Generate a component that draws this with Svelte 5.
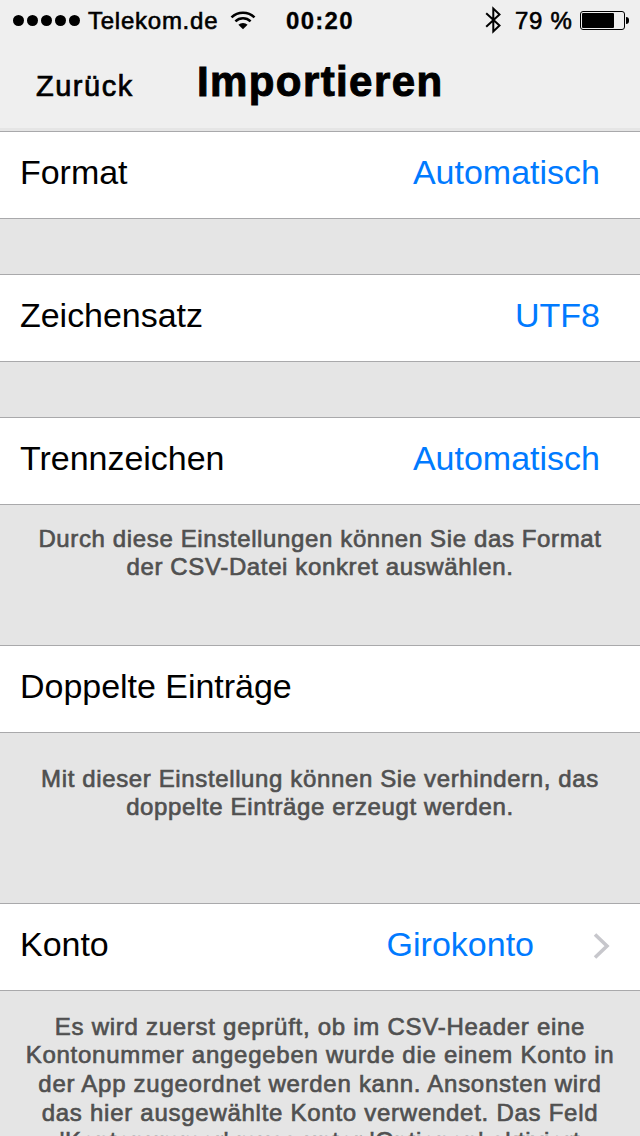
<script lang="ts">
	type Section = {
		id: string;
		label: string;
		value?: string;
		link?: boolean;
		hint?: string[];
	};

	const carrier = 'Telekom.de';
	const battery = 79;

	const sections: Section[] = [
		{ id: 'format', label: 'Format', value: 'Automatisch' },
		{ id: 'charset', label: 'Zeichensatz', value: 'UTF8' },
		{
			id: 'separator',
			label: 'Trennzeichen',
			value: 'Automatisch',
			hint: ['Durch diese Einstellungen können Sie das Format', 'der CSV-Datei konkret auswählen.']
		},
		{
			id: 'duplicates',
			label: 'Doppelte Einträge',
			hint: ['Mit dieser Einstellung können Sie verhindern, das', 'doppelte Einträge erzeugt werden.']
		},
		{
			id: 'account',
			label: 'Konto',
			value: 'Girokonto',
			link: true,
			hint: [
				'Es wird zuerst geprüft, ob im CSV-Header eine',
				'Kontonummer angegeben wurde die einem Konto in',
				'der App zugeordnet werden kann. Ansonsten wird',
				'das hier ausgewählte Konto verwendet. Das Feld',
				"'Kontonummer' muss unter 'Optionen' aktiviert"
			]
		}
	];
</script>

<div class="screen">
	<header>
		<div class="status">
			<div class="dots">
				{#each Array(5) as _}
					<i></i>
				{/each}
			</div>
			<span class="carrier">{carrier}</span>
			<svg class="wifi" width="26" height="20" viewBox="0 0 26 20" aria-hidden="true">
				<g fill="none" stroke="#000" stroke-width="2.5">
					<path d="M1.5 6.3a16.5 16.5 0 0 1 23 0" />
					<path d="M5.4 10.4a11 11 0 0 1 15.2 0" />
				</g>
				<path d="M8.4 13.7a6.8 6.8 0 0 1 9.2 0L13 18.3z" />
			</svg>
			<span class="time">00:20</span>
			<svg class="bluetooth" width="17" height="28" viewBox="0 0 17 28" aria-hidden="true">
				<path d="M1.2 7.3 14.5 19.6 8.3 25.4V2.6L14.5 8.4 1.2 20.7" fill="none" stroke="#000" stroke-width="2" />
			</svg>
			<span class="percent">{battery} %</span>
			<div class="battery">
				<div class="case"><div class="level" style="width: {battery}%"></div></div>
				<div class="tip"></div>
			</div>
		</div>
		<nav>
			<button type="button" class="back">Zurück</button>
			<h1>Importieren</h1>
		</nav>
	</header>

	<main>
		{#each sections as section}
			<section class={section.id}>
				<div class="row">
					<span class="label">{section.label}</span>
					{#if section.value}
						<span class="value">{section.value}</span>
					{/if}
					{#if section.link}
						<svg class="chevron" width="18" height="28" viewBox="0 0 18 28" aria-hidden="true">
							<path d="M2 2.5 14 14 2 25.5" fill="none" stroke="#c7c7cc" stroke-width="3.6" />
						</svg>
					{/if}
				</div>
				{#if section.hint}
					<p>
						{#each section.hint as line}
							<span>{line}</span>
						{/each}
					</p>
				{/if}
			</section>
		{/each}
	</main>
</div>

<style>
	:global(body) {
		background: #e5e5e5;
	}

	.screen {
		height: 1136px;
		overflow: hidden;
		background: #e5e5e5;
		color: #000;
		font-family: 'Liberation Sans', Arial, sans-serif;
	}

	header {
		height: 128px;
		margin-bottom: 3px;
		background: #efefef;
	}

	.status {
		display: flex;
		align-items: center;
		height: 41px;
		padding-left: 13px;
		font-size: 24px;
		line-height: 42px;
		white-space: nowrap;
		-webkit-text-stroke: 0.6px currentColor;
	}

	.dots {
		display: flex;
		gap: 3px;
		width: 75px;
	}

	.dots i {
		width: 11px;
		height: 11px;
		border-radius: 50%;
		background: #000;
	}

	.carrier {
		width: 142px;
		letter-spacing: 0.75px;
	}

	.wifi {
		width: 26px;
	}

	.time {
		width: 199px;
		margin-left: 30px;
		font-weight: 700;
		letter-spacing: 1.3px;
		-webkit-text-stroke: 0.3px currentColor;
	}

	.bluetooth {
		margin-top: -2px;
	}

	.percent {
		width: 58px;
		margin-left: 13px;
		letter-spacing: 0.7px;
	}

	.battery {
		display: flex;
		align-items: center;
		margin-left: 7px;
	}

	.case {
		box-sizing: border-box;
		width: 45px;
		height: 19px;
		padding: 1px;
		border: 1px solid #000;
		border-radius: 3px;
	}

	.level {
		height: 15px;
		background: #000;
		border-radius: 1px;
	}

	.tip {
		width: 3px;
		height: 7px;
		margin-left: 1px;
		background: #000;
		border-radius: 0 3px 3px 0;
	}

	nav {
		display: flex;
		align-items: baseline;
		height: 87px;
		padding-left: 36px;
	}

	.back {
		width: 161px;
		padding: 0;
		border: 0;
		background: none;
		color: inherit;
		font: inherit;
		font-size: 29px;
		letter-spacing: 1.5px;
		text-align: left;
		-webkit-text-stroke: 0.7px currentColor;
	}

	h1 {
		margin: 0;
		font-size: 42px;
		letter-spacing: 1.4px;
		line-height: 82px;
		-webkit-text-stroke: 1px currentColor;
	}

	section {
		height: 143px;
	}

	.separator {
		height: 228px;
	}

	.duplicates {
		height: 258px;
	}

	.row {
		box-sizing: border-box;
		display: flex;
		align-items: center;
		height: 88px;
		padding: 0 40px 6px 20px;
		border: solid #a9a9ab;
		border-width: 1px 0;
		background: #fff;
		font-size: 34px;
	}

	.label {
		letter-spacing: -0.03px;
	}

	.value {
		margin-left: auto;
		color: #007aff;
	}

	.chevron {
		margin: 4px -11px 0 59px;
	}

	p {
		margin: 20px 0 0;
		color: #505050;
		font-size: 24px;
		letter-spacing: 0.63px;
		line-height: 28px;
		text-align: center;
		-webkit-text-stroke: 0.65px currentColor;
	}

	.duplicates p {
		margin-top: 32px;
	}

	.account p {
		margin-top: 21.6px;
		letter-spacing: 0.73px;
		line-height: 28.65px;
	}

	p span {
		display: block;
		white-space: nowrap;
	}
</style>
